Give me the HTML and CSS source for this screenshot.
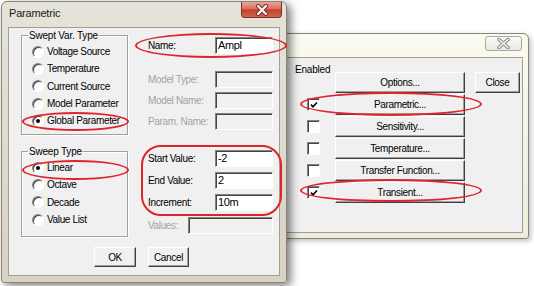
FILE: index.html
```html
<!DOCTYPE html>
<html>
	<head>
		<meta charset="UTF-8">
		<title>Parametric</title>
		<link rel="stylesheet" href="styles.css">
	</head>
	<body>
		<div class="desk">
			<!-- analysis setup window, behind -->
			<div class="win back">
				<div class="titleBar">
					<span class="closeBtn idle">
						<svg width="13" height="11" viewBox="0 0 13 11"><path d="M2 1.5 L11 9.5 M11 1.5 L2 9.5" stroke="#8a8a8a" stroke-width="3.6" stroke-linecap="round"/><path d="M2 1.5 L11 9.5 M11 1.5 L2 9.5" stroke="#f4f4f4" stroke-width="1.6" stroke-linecap="round"/></svg>
					</span>
				</div>
				<div class="client">
					<div class="enabled">Enabled</div>
					<ul class="analysis">
						<li><span class="box none"></span><span class="btn wide">Options...</span><span class="btn close">Close</span></li>
						<li><span class="box checked"><svg width="8" height="8" viewBox="0 0 8 8"><path d="M1 3.5 L3 5.8 L7 1.5" stroke="#000" stroke-width="1.6" fill="none"/></svg></span><span class="btn wide">Parametric...</span></li>
						<li><span class="box"></span><span class="btn wide">Sensitivity...</span></li>
						<li><span class="box"></span><span class="btn wide">Temperature...</span></li>
						<li><span class="box"></span><span class="btn wide">Transfer Function...</span></li>
						<li><span class="box checked"><svg width="8" height="8" viewBox="0 0 8 8"><path d="M1 3.5 L3 5.8 L7 1.5" stroke="#000" stroke-width="1.6" fill="none"/></svg></span><span class="btn wide">Transient...</span></li>
					</ul>
				</div>
			</div>

			<!-- parametric dialog, front -->
			<div class="win front">
				<div class="titleBar">
					<span class="caption">Parametric</span>
					<span class="closeBtn hot">
						<svg width="14" height="12" viewBox="0 0 14 12"><path d="M3 2 L11 10 M11 2 L3 10" stroke="#7a2a20" stroke-width="4" stroke-linecap="round"/><path d="M3 2 L11 10 M11 2 L3 10" stroke="#fff" stroke-width="2.2" stroke-linecap="round"/></svg>
					</span>
				</div>
				<div class="client">
					<div class="top">
						<div class="groups">
							<div class="group swept">
								<div class="legend">Swept Var. Type</div>
								<ul class="radios">
									<li><span class="radio"></span>Voltage Source</li>
									<li><span class="radio"></span>Temperature</li>
									<li><span class="radio"></span>Current Source</li>
									<li><span class="radio"></span>Model Parameter</li>
									<li><span class="radio on"></span>Global Parameter</li>
								</ul>
							</div>
							<div class="group sweep">
								<div class="legend">Sweep Type</div>
								<ul class="radios">
									<li><span class="radio on"></span>Linear</li>
									<li><span class="radio"></span>Octave</li>
									<li><span class="radio"></span>Decade</li>
									<li><span class="radio"></span>Value List</li>
								</ul>
							</div>
						</div>
						<div class="fields">
							<div class="row rName"><label>Name:</label><span class="edit">Ampl</span></div>
							<div class="row rModelType off"><label>Model Type:</label><span class="edit"></span></div>
							<div class="row rSmall off"><label>Model Name:</label><span class="edit"></span></div>
							<div class="row rSmall off"><label>Param. Name:</label><span class="edit"></span></div>
							<div class="row rStart"><label>Start Value:</label><span class="edit">-2</span></div>
							<div class="row rSmall"><label>End Value:</label><span class="edit">2</span></div>
							<div class="row rSmall"><label>Increment:</label><span class="edit">10m</span></div>
							<div class="row rValues off"><label>Values:</label><span class="edit"></span></div>
						</div>
					</div>
					<div class="actions">
						<span class="btn ok">OK</span>
						<span class="btn cancel">Cancel</span>
					</div>
				</div>
			</div>

			<!-- red annotation marks -->
			<div class="mark mName"></div>
			<div class="mark mGlobal"></div>
			<div class="mark mLinear"></div>
			<div class="mark mRange"></div>
			<div class="mark mParam"></div>
			<div class="mark mTrans"></div>
		</div>
	</body>
</html>
```

FILE: styles.css
```css
body {
	margin: 0;
	background: #fff;
	font: 10px/13px "Liberation Sans", Arial, sans-serif;
	letter-spacing: -0.35px;
	color: #000;
}
ul {
	margin: 0;
	padding: 0;
}
li {
	list-style: none;
}
.desk {
	position: relative;
	width: 534px;
	height: 286px;
	overflow: hidden;
}

/* windows */
.win {
	position: absolute;
	box-sizing: border-box;
	border: 1px solid #86837a;
	border-radius: 6px 6px 3px 3px;
	display: flex;
	flex-direction: column;
}
.front {
	left: 1px;
	top: 1px;
	width: 286px;
	height: 282px;
	background: linear-gradient(#e6e3d9, #d7d2c1);
	box-shadow: 4px 3px 8px rgba(0, 0, 0, .5);
}
.back {
	left: 200px;
	top: 33px;
	width: 329px;
	height: 206px;
	background: linear-gradient(#fbfaee, #efecdb);
	box-shadow: 2px 2px 5px rgba(0, 0, 0, .25);
}
.titleBar {
	display: flex;
	flex: none;
}
.front .titleBar {
	height: 25px;
	padding-left: 7px;
}
.back .titleBar {
	height: 23px;
	justify-content: flex-end;
}
.caption {
	font-size: 11px;
	line-height: 23px;
	letter-spacing: -0.2px;
	color: #1a1a1a;
}
.closeBtn {
	box-sizing: border-box;
	display: flex;
	align-items: center;
	justify-content: center;
}
.hot {
	margin-left: auto;
	margin-right: 4px;
	width: 41px;
	height: 16px;
	border: 1px solid #7d3024;
	border-top: none;
	border-radius: 0 0 4px 4px;
	background: linear-gradient(#e9a595 0%, #d9705d 45%, #c4412d 52%, #cf6550 100%);
}
.idle {
	margin: 2px 6px 0 0;
	width: 37px;
	height: 15px;
	border: 1px solid #a7a5a0;
	border-radius: 3px;
	background: linear-gradient(#fbfbfa, #e9e8e2);
}
.client {
	flex: 1;
	background: #f0f0f0;
	border: 1px solid #a19e94;
}
.front .client {
	margin: 0 6px 6px 6px;
	display: flex;
	flex-direction: column;
}
.back .client {
	margin: 0 5px 5px 5px;
}

/* front dialog */
.top {
	display: flex;
	height: 219px;
}
.groups {
	margin-left: 12px;
	padding-top: 7px;
	width: 107px;
	display: flex;
	flex-direction: column;
}
.group {
	box-sizing: border-box;
	border: 1px solid #a0a0a0;
	box-shadow: inset 1px 1px #fff, 1px 1px #fff;
	padding-left: 10px;
}
.swept {
	height: 100px;
}
.sweep {
	height: 86px;
	margin-top: 16px;
}
.legend {
	display: table;
	margin: -7px 0 0 -4px;
	padding: 0 1px;
	background: #f0f0f0;
	letter-spacing: -0.2px;
}
.radios {
	padding-top: 1px;
}
.radios li {
	height: 17.3px;
	display: flex;
	align-items: center;
	white-space: nowrap;
}
.radio {
	box-sizing: border-box;
	width: 12px;
	height: 12px;
	margin-right: 3px;
	border-radius: 50%;
	border: 1px solid;
	border-color: #808080 #fff #fff #808080;
	background: #fff;
	box-shadow: inset 1px 1px #404040;
	display: flex;
	align-items: center;
	justify-content: center;
}
.radio.on:after {
	content: "";
	width: 4px;
	height: 4px;
	border-radius: 50%;
	background: #000;
}
.fields {
	margin-left: 20px;
	padding-top: 9px;
}
.row {
	display: flex;
	align-items: center;
	height: 17px;
	white-space: nowrap;
}
.row label {
	flex: 0 0 67px;
}
.rModelType {
	margin-top: 17px;
}
.rSmall {
	margin-top: 4px;
}
.rStart {
	margin-top: 20px;
}
.rStart + .rSmall,
.rStart + .rSmall + .rSmall {
	margin-top: 5px;
}
.rValues {
	margin-top: 6px;
}
.rValues label {
	flex-basis: 40px;
}
.edit {
	box-sizing: border-box;
	width: 58px;
	height: 17px;
	padding-left: 2px;
	line-height: 14px;
	background: #fff;
	border: 1px solid;
	border-color: #828282 #fff #fff #828282;
	box-shadow: inset 1px 1px #454545;
	font-size: 11px;
}
.rValues .edit {
	width: 85px;
}
.off label {
	color: #a3a3a3;
}
.off .edit {
	background: #f0f0f0;
}
.actions {
	display: flex;
	gap: 12px;
	padding-left: 85px;
}

/* buttons */
.btn {
	box-sizing: border-box;
	display: flex;
	align-items: center;
	justify-content: center;
	background: #f0f0f0;
	border: 1px solid;
	border-color: #fff #404040 #404040 #fff;
	box-shadow: inset -1px -1px #a0a0a0;
	white-space: nowrap;
}
.ok {
	width: 42px;
	height: 20px;
}
.cancel {
	width: 41px;
	height: 20px;
}

/* back dialog */
.enabled {
	padding: 5px 0 0 88px;
	margin-bottom: -4px;
	letter-spacing: -0.2px;
}
.analysis li {
	display: flex;
	align-items: center;
	height: 21px;
	margin-bottom: 1px;
	padding-left: 100px;
}
.box {
	box-sizing: border-box;
	flex: none;
	width: 13px;
	height: 13px;
	margin-right: 15px;
	background: #fff;
	border: 1px solid;
	border-color: #828282 #fff #fff #828282;
	box-shadow: inset 1px 1px #454545;
	display: flex;
	align-items: center;
	justify-content: center;
}
.box.none {
	visibility: hidden;
}
.wide {
	width: 130px;
	height: 21px;
}
.close {
	width: 45px;
	height: 21px;
	margin-left: 10px;
}

/* annotation marks */
.mark {
	position: absolute;
	box-sizing: border-box;
	border: 2px solid #e0232c;
	border-radius: 50%;
}
.mName {
	left: 135px;
	top: 33px;
	width: 152px;
	height: 25px;
}
.mGlobal {
	left: 22px;
	top: 112px;
	width: 107px;
	height: 19px;
}
.mLinear {
	left: 22px;
	top: 160px;
	width: 107px;
	height: 20px;
}
.mRange {
	left: 141px;
	top: 145px;
	width: 141px;
	height: 71px;
	border-radius: 20px;
}
.mParam {
	left: 300px;
	top: 92px;
	width: 182px;
	height: 24px;
}
.mTrans {
	left: 300px;
	top: 179px;
	width: 182px;
	height: 23px;
}
```
